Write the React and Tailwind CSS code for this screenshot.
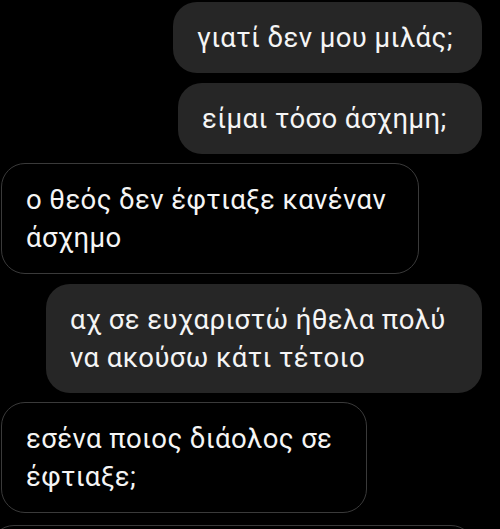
const messages = [
  { mine: true, lines: ['γιατί δεν μου μιλάς;'], mt: 'mt-[2px]', w: 'w-[309px]' },
  { mine: true, lines: ['είμαι τόσο άσχημη;'], mt: 'mt-[10px]', w: 'w-[304px]' },
  { mine: false, lines: ['ο θεός δεν έφτιαξε κανέναν', 'άσχημο'], mt: 'mt-[9px]', w: 'w-[418px]' },
  { mine: true, lines: ['αχ σε ευχαριστώ ήθελα πολύ', 'να ακούσω κάτι τέτοιο'], mt: 'mt-[10px]', w: 'w-[436px]' },
  { mine: false, lines: ['εσένα ποιος διάολος σε', 'έφτιαξε;'], mt: 'mt-[9px]', w: 'w-[366px]' },
];

function Bubble({ mine, lines, mt, w }) {
  const base = mine
    ? 'bg-[#262626] self-end mr-[18px]'
    : 'bg-black border border-[#3a3a3a] self-start ml-[1px]';
  return (
    <div
      className={`${base} ${mt} ${w} rounded-[24px] pl-[24px] pr-[20px] py-[16.5px] text-[27.5px] leading-[38px] tracking-[0.4px] text-[#f5f5f5] whitespace-nowrap`}
    >
      {lines.map((l, i) => (
        <div key={i}>{l}</div>
      ))}
    </div>
  );
}

export default function App() {
  return (
    <div
      className="w-[500px] h-[529px] bg-black overflow-hidden flex flex-col"
      style={{ fontFamily: 'Roboto, "Noto Sans", sans-serif' }}
    >
      {messages.map((m, i) => (
        <Bubble key={i} {...m} />
      ))}
      {/* next message, cut off at the bottom */}
      <div className="mt-[12px] -ml-[10px] w-[485px] h-[80px] shrink-0 rounded-[24px] border border-[#3a3a3a] bg-black" />
    </div>
  );
}
